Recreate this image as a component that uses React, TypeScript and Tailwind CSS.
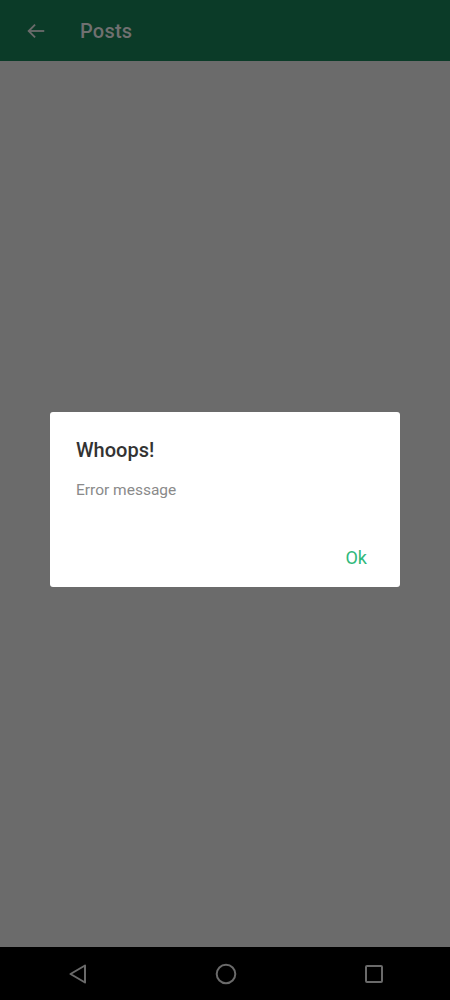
import React from "react";

export default function App() {
  return (
    <div className="w-[450px] h-[1000px] flex flex-col bg-[#6b6b6b]" style={{ fontFamily: "Roboto, 'Noto Sans', sans-serif" }}>
      <header className="h-[61px] bg-[#0b3b28] flex items-center shrink-0">
        <div className="w-[80px] flex items-center pl-[25px]">
          <svg width="22" height="22" viewBox="0 0 24 24" fill="none" stroke="#6b6b6b" strokeWidth="2" strokeLinecap="square">
            <path d="M20 12H5" />
            <path d="M11 5l-7 7 7 7" strokeLinecap="butt" />
          </svg>
        </div>
        <span className="text-[20px] font-medium text-[#707070] tracking-[0.2px]">Posts</span>
      </header>
      <main className="flex-1 flex flex-col">
        <div className="mt-[351px] mx-[50px] bg-white rounded-[3px] h-[175px] flex flex-col">
          <div className="pl-[26px] pt-[25px] text-[20px] font-medium text-[#333333] leading-[26px]">Whoops!</div>
          <div className="pl-[26px] pt-[17px] text-[15.5px] text-[#8a8a8a] leading-[20px]">Error message</div>
          <div className="flex-1" />
          <div className="flex justify-end pr-[33px] pb-[17px] text-[18px] text-[#2fb97b] leading-[24px]">Ok</div>
        </div>
      </main>
      <nav className="h-[53px] bg-black flex items-center shrink-0">
        <div className="flex-1 flex justify-center pl-[4px]">
          <svg width="20" height="22" viewBox="0 0 20 22" fill="none" stroke="#6a6a6a" strokeWidth="2" strokeLinejoin="round">
            <path d="M17 2.5 L2.5 11 L17 19.5 Z" />
          </svg>
        </div>
        <div className="flex-1 flex justify-center">
          <svg width="22" height="22" viewBox="0 0 22 22" fill="none" stroke="#6a6a6a" strokeWidth="2">
            <circle cx="11" cy="11" r="9.3" />
          </svg>
        </div>
        <div className="flex-1 flex justify-center pr-[2px]">
          <svg width="20" height="20" viewBox="0 0 20 20" fill="none" stroke="#6a6a6a" strokeWidth="2">
            <rect x="2" y="2" width="16" height="16" rx="1" />
          </svg>
        </div>
      </nav>
    </div>
  );
}
